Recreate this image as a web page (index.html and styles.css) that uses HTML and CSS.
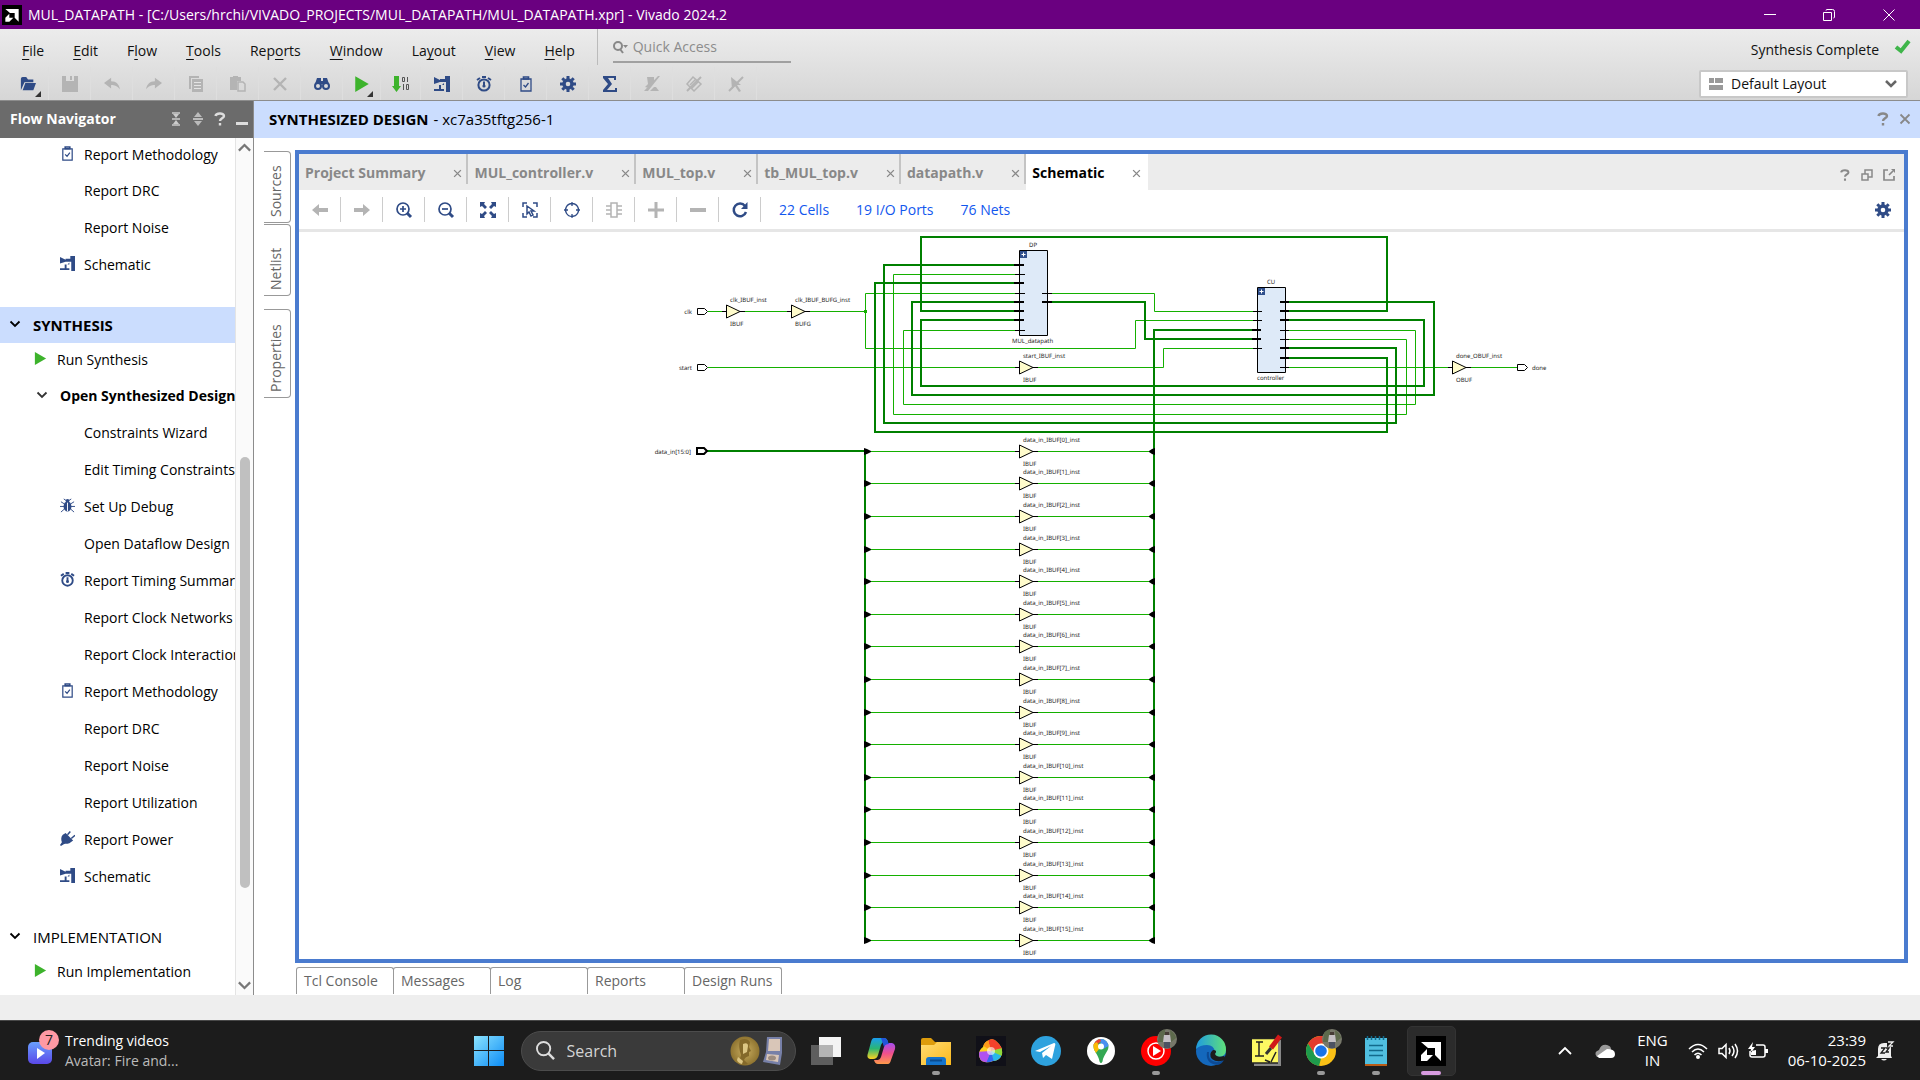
FILE: index.html
```html
<!DOCTYPE html>
<html lang="en">
<head>
<meta charset="utf-8">
<title>MUL_DATAPATH - Vivado 2024.2</title>
<link rel="stylesheet" href="styles.css">
</head>
<body>
<svg class="defs" aria-hidden="true">
  <defs>
    <linearGradient id="gWin" x1="0" y1="0" x2="1" y2="1"><stop offset="0" stop-color="#8be3ff"/><stop offset="1" stop-color="#0c8cf5"/></linearGradient>
    <linearGradient id="gVid" x1="0" y1="0" x2="0" y2="1"><stop offset="0" stop-color="#6aa0ff"/><stop offset="1" stop-color="#5a48e8"/></linearGradient>
    <linearGradient id="gCopA" x1="0" y1="0" x2="0" y2="1"><stop offset="0" stop-color="#1a9cf0"/><stop offset=".5" stop-color="#2bb673"/><stop offset="1" stop-color="#ffd21f"/></linearGradient>
    <linearGradient id="gCopB" x1="0" y1="0" x2="0" y2="1"><stop offset="0" stop-color="#a44df0"/><stop offset=".5" stop-color="#f0508c"/><stop offset="1" stop-color="#ff9a4a"/></linearGradient>
    <linearGradient id="gEdge" x1="0" y1="0" x2="1" y2="0"><stop offset="0" stop-color="#1f9be0"/><stop offset="1" stop-color="#5fe07a"/></linearGradient>
    <linearGradient id="gFold" x1="0" y1="0" x2="1" y2="1"><stop offset="0" stop-color="#ffdc73"/><stop offset="1" stop-color="#fbb91c"/></linearGradient>
    <radialGradient id="gMedal"><stop offset="0" stop-color="#c9ad5f"/><stop offset="1" stop-color="#8f7430"/></radialGradient>
    <clipPath id="cBlob"><path d="M13 4q5-2 8 2 6 5 5 12-2 7-9 7-4 2-8 1-6-1-6-8 0-4 4-7 1-5 6-7z"/></clipPath>
    <clipPath id="cPin"><path d="M15 3a7.500 7.500 0 0 1 7.500 7.500c0 5-5 8-6 15q-1.500 3-3 0c-1-7-6-10-6-15A7.500 7.500 0 0 1 15 3z"/></clipPath>
  </defs>
  <symbol id="schem" viewBox="0 0 16 16"><path fill="currentColor" d="M0 1l6 3v-1h5V0h5v16h-4V6H6L0 8zM10 7v2H7v4h3v2H0v-2h5V9h3z"/></symbol>
  <symbol id="clip" viewBox="0 0 16 16"><path fill="none" stroke="currentColor" stroke-width="1.300" d="M3 3h10v12H3zM5.500 9l2 2 3-4"/><path fill="none" stroke="currentColor" stroke-width="1.600" d="M5.500 3V1h5v2z"/></symbol>
  <symbol id="timer" viewBox="0 0 16 16"><circle cx="8" cy="9" r="5.600" fill="none" stroke="currentColor" stroke-width="2"/><path fill="none" stroke="currentColor" stroke-width="2" d="M8 5.500V10M6 1h4M1 4l3-2M15 4l-3-2"/><circle cx="8" cy="10" r="1.600" fill="currentColor"/></symbol>
  <symbol id="bug" viewBox="0 0 16 16"><ellipse cx="8" cy="9" rx="4.200" ry="5.500" fill="currentColor"/><circle cx="8" cy="3" r="2" fill="currentColor"/><path stroke="currentColor" fill="none" d="M4 1l3 2M12 1L9 3M1 4l4 2.500M15 4l-4 2.500M0 9h16M1 15l4-3.500M15 15l-4-3.500"/><path stroke="#fff" d="M8 5v9"/></symbol>
  <symbol id="plug" viewBox="0 0 16 16"><path fill="currentColor" d="M3 4l3-2 8 8-4 3c-3 1-4 0-6 1l-3 2-1-1 2-3C1 9 1 6 3 4z"/><path stroke="currentColor" stroke-width="1.600" d="M8 4l3-3.500M12 8l4-3.500"/></symbol>
  <symbol id="play" viewBox="0 0 16 16"><path fill="#3db32c" d="M2 1l12 7-12 7z"/></symbol>
  <symbol id="gear" viewBox="0 0 16 16"><circle cx="8" cy="8" r="4" fill="none" stroke="currentColor" stroke-width="3.400"/><path stroke="currentColor" stroke-width="3" d="M8 0v3M8 13v3M0 8h3M13 8h3M2.300 2.300l2 2M11.700 11.700l2 2M2.300 13.700l2-2M11.700 4.300l2-2"/></symbol>
  <symbol id="chev" viewBox="0 0 12 12"><path fill="none" stroke="currentColor" stroke-width="1.800" d="M1.500 3.500L6 8l4.500-4.500"/></symbol>
  <symbol id="x" viewBox="0 0 12 12"><path fill="none" stroke="currentColor" stroke-width="1.800" d="M1.500 1.500l9 9M10.500 1.500l-9 9"/></symbol>
  <symbol id="help" viewBox="0 0 12 14"><path fill="none" stroke="currentColor" stroke-width="2.400" d="M1.500 4C2 .8 10 .5 10 4c0 2.200-4 2.500-4 5M6 11v2.600"/></symbol>
  <symbol id="arrow" viewBox="0 0 16 16"><path fill="currentColor" d="M0 8l7-6v4h9v4H7v4z"/></symbol>
  <symbol id="undo" viewBox="0 0 18 16"><path fill="currentColor" d="M0 7l8-6v4c6 0 9 4 10 9-3-4-6-5-10-5v4z"/></symbol>
  <symbol id="amd" viewBox="0 0 30 30"><path fill="#000" d="M0 0h30v30H0z"/><path fill="#fff" d="M5 6h20v19l-6-6v-7h-7zM11 13v6h6l-6 6H5v-6z"/></symbol>
  <symbol id="face" viewBox="0 0 20 20"><circle cx="10" cy="10" r="10" fill="#77786a"/><path fill="#5d6a4c" d="M2 4q4-4 6-3v12H1zM13 1q5 3 6 8l-5 4z"/><path fill="#463c35" d="M8 3h4v3H8z"/><path fill="#c4c0c4" d="M7 6h6l1 7H6z"/><path fill="#4c5262" d="M7 13h6v6H7z"/></symbol>
</svg>

<header class="titlebar">
  <svg class="i20"><use href="#amd"/></svg>
  <h1>MUL_DATAPATH - [C:/Users/hrchi/VIVADO_PROJECTS/MUL_DATAPATH/MUL_DATAPATH.xpr] - Vivado 2024.2</h1>
  <div class="winbtns">
    <button aria-label="Minimize"><svg viewBox="0 0 12 12"><path d="M0 5.500h12"/></svg></button>
    <button aria-label="Restore"><svg viewBox="0 0 12 12"><path d="M.5 3.500h8v8h-8zM3 1.500q0-1 1-1h5.500q2 0 2 2V8q0 1-1 1"/></svg></button>
    <button aria-label="Close"><svg viewBox="0 0 12 12"><path d="M.5.5l11 11M11.500.5l-11 11"/></svg></button>
  </div>
</header>

<div class="ribbon">
  <div class="left">
    <div class="menurow">
      <nav class="menu">
        <button><u>F</u>ile</button><button><u>E</u>dit</button><button>F<u>l</u>ow</button><button><u>T</u>ools</button><button>Rep<u>o</u>rts</button><button><u>W</u>indow</button><button>La<u>y</u>out</button><button><u>V</u>iew</button><button><u>H</u>elp</button>
      </nav>
      <label class="quick"><svg viewBox="0 0 16 14"><circle cx="5" cy="6" r="4"/><path class="tail" d="M7 9l3 4"/><path class="tip" d="M10 5h5l-2.500 3z"/></svg><input type="text" placeholder="Quick Access" aria-label="Quick Access"></label>
    </div>
    <div class="tools">
      <button aria-label="Open project"><svg class="i16" viewBox="0 0 18 18"><path fill="currentColor" d="M1 16V3q0-2 2-2h4l2 3h6v3H5zM3 16L6 8h12l-3 8z"/></svg><i class="corner"></i></button>
      <button class="off" aria-label="Save"><svg class="i16" viewBox="0 0 16 16"><path fill="currentColor" d="M0 0h4v5h8V0h4v16H0zM8 0h2v4H8z"/></svg></button>
      <button class="off" aria-label="Undo"><svg class="i16"><use href="#undo"/></svg></button>
      <button class="off" aria-label="Redo"><svg class="i16 flip"><use href="#undo"/></svg></button>
      <button class="off" aria-label="Copy"><svg class="i16" viewBox="0 0 16 16"><path fill="currentColor" d="M1 0h10v2H3v11H1zM4 3h11v13H4z"/><path stroke="#e4e4e4" d="M6 6.500h7M6 9.500h7M6 12.500h7"/></svg></button>
      <button class="off" aria-label="Paste"><svg class="i16" viewBox="0 0 16 16"><path fill="currentColor" d="M0 1h3V0h5v1h3v4H7v9H0z"/><path fill="none" stroke="currentColor" stroke-width="1.500" d="M8 6h5l2 2v7H8z"/></svg></button>
      <button class="off" aria-label="Delete"><svg class="i16"><use href="#x"/></svg></button>
      <button aria-label="Find"><svg class="i16" viewBox="0 0 16 16"><path fill="currentColor" d="M3 2h4v3h2V2h4l2 6H1z"/><g fill="none" stroke="currentColor" stroke-width="2"><circle cx="4" cy="10" r="3"/><circle cx="12" cy="10" r="3"/></g></svg></button>
      <button class="run" aria-label="Run"><svg class="i18"><use href="#play"/></svg><i class="corner"></i></button>
      <button class="bits" aria-label="Generate bitstream"><svg class="i16" viewBox="0 0 16 16"><path fill="#3db32c" d="M1 0h5v10h2l-4.500 6L-1 10h2z"/><path fill="none" stroke="#555" d="M9.500 1.500h2v4h-2zM14.500 1v5M10.500 8v6M13.500 8.500h2v5h-2z"/></svg></button>
      <button aria-label="Schematic"><svg class="i16"><use href="#schem"/></svg></button>
      <button aria-label="Timing"><svg class="i16"><use href="#timer"/></svg></button>
      <button aria-label="Methodology"><svg class="i16"><use href="#clip"/></svg></button>
      <button aria-label="Settings"><svg class="i16"><use href="#gear"/></svg></button>
      <button aria-label="Report"><svg class="i16" viewBox="0 0 16 16"><path fill="currentColor" d="M1 0h13v4h-2V2H6l4 6-5 6h8v-2h2v4H1v-2l5-6-5-6z"/></svg></button>
      <button class="off" aria-label="Unmark"><svg class="i16" viewBox="0 0 16 16"><path fill="currentColor" d="M3 1h7v4l2-1-7 8-4-1 3-3zM0 15L14 0h2L4 15zM6 15l4-4h2l3 4z"/></svg></button>
      <button class="off" aria-label="Clear highlight"><svg class="i16" viewBox="0 0 16 16"><path fill="none" stroke="currentColor" stroke-width="1.500" d="M1 8l6-7 8 7-7 7zM4 9l6-6M6 12l6-6"/><path stroke="currentColor" stroke-width="2" d="M1 15L15 1"/></svg></button>
      <button class="off" aria-label="Unselect"><svg class="i16" viewBox="0 0 16 16"><path fill="currentColor" d="M3 1l10 8H9l4 6-2 1-4-6-3 3z"/><path stroke="currentColor" stroke-width="2" d="M1 15L15 1"/></svg></button>
    </div>
  </div>
  <div class="right">
    <div class="status">Synthesis Complete <svg class="i16" viewBox="0 0 16 16"><path fill="none" stroke="#3fb54a" stroke-width="4" d="M1 8l5 4 8-10"/></svg></div>
    <div class="layout">
      <svg viewBox="0 0 14 12"><path fill="#999" d="M0 0h5v5H0zM6 0h8v5H6zM0 7h14v5H0z"/></svg>
      <select aria-label="Layout"><option>Default Layout</option></select>
      <svg viewBox="0 0 12 12"><path fill="none" stroke="#666" stroke-width="2.500" d="M1 3l5 5 5-5"/></svg>
    </div>
  </div>
</div>

<main>
  <aside>
    <div class="navhead"><h2>Flow Navigator</h2>
      <button aria-label="Collapse all"><svg viewBox="0 0 12 14"><path d="M2 7h8M2 1h8M2 13h8" stroke="#ccc" stroke-width="1.500"/><path fill="#ccc" d="M3 2h6L6 6zM3 12h6L6 8z"/></svg></button>
      <button aria-label="Expand all"><svg viewBox="0 0 12 14"><path fill="#bbb" d="M2 5h8L6 0zM2 9h8l-4 5zM1 6h10v2H1z"/></svg></button>
      <button aria-label="Help"><svg viewBox="0 0 12 14"><use href="#help"/></svg></button>
      <button aria-label="Minimize panel"><svg viewBox="0 0 12 14"><path fill="#ddd" d="M0 10h12v3H0z"/></svg></button>
    </div>
    <div class="navbody">
      <nav class="tree">
        <ul>
          <li><svg><use href="#clip"/></svg><a href="#">Report Methodology</a></li>
          <li><a href="#">Report DRC</a></li>
          <li><a href="#">Report Noise</a></li>
          <li><svg><use href="#schem"/></svg><a href="#">Schematic</a></li>
        </ul>
        <h3 class="sel"><svg><use href="#chev"/></svg>SYNTHESIS</h3>
        <ul>
          <li class="act"><svg><use href="#play"/></svg><a href="#">Run Synthesis</a></li>
          <li class="open"><svg><use href="#chev"/></svg><a href="#">Open Synthesized Design</a></li>
          <li><a href="#">Constraints Wizard</a></li>
          <li><a href="#">Edit Timing Constraints</a></li>
          <li><svg><use href="#bug"/></svg><a href="#">Set Up Debug</a></li>
          <li><a href="#">Open Dataflow Design</a></li>
          <li><svg><use href="#timer"/></svg><a href="#">Report Timing Summary</a></li>
          <li><a href="#">Report Clock Networks</a></li>
          <li><a href="#">Report Clock Interaction</a></li>
          <li><svg><use href="#clip"/></svg><a href="#">Report Methodology</a></li>
          <li><a href="#">Report DRC</a></li>
          <li><a href="#">Report Noise</a></li>
          <li><a href="#">Report Utilization</a></li>
          <li><svg><use href="#plug"/></svg><a href="#">Report Power</a></li>
          <li><svg><use href="#schem"/></svg><a href="#">Schematic</a></li>
        </ul>
        <h3><svg><use href="#chev"/></svg>IMPLEMENTATION</h3>
        <ul>
          <li class="act"><svg><use href="#play"/></svg><a href="#">Run Implementation</a></li>
        </ul>
      </nav>
      <div class="scroll">
        <svg class="up"><use href="#chev"/></svg>
        <div class="thumb"></div>
        <svg><use href="#chev"/></svg>
      </div>
    </div>
  </aside>

  <section class="design">
    <div class="dhead"><h2>SYNTHESIZED DESIGN</h2><span>- xc7a35tftg256-1</span>
      <button aria-label="Help"><svg><use href="#help"/></svg></button>
      <button aria-label="Close design"><svg><use href="#x"/></svg></button>
    </div>
    <div class="work">
      <div class="sidetabs">
        <button>Sources</button><button>Netlist</button><button class="apart">Properties</button>
      </div>
      <div class="stack">
        <div class="pane">
          <div class="tabs">
            <button>Project Summary<svg><use href="#x"/></svg></button>
            <button>MUL_controller.v<svg><use href="#x"/></svg></button>
            <button>MUL_top.v<svg><use href="#x"/></svg></button>
            <button>tb_MUL_top.v<svg><use href="#x"/></svg></button>
            <button>datapath.v<svg><use href="#x"/></svg></button>
            <button class="on">Schematic<svg><use href="#x"/></svg></button>
            <div class="ptools">
              <svg viewBox="0 0 12 12"><use href="#help"/></svg>
              <svg viewBox="0 0 12 12"><path fill="none" stroke="currentColor" stroke-width="1.500" d="M1 5h6v6H1zM4 5V1h7v7H7"/></svg>
              <svg viewBox="0 0 12 12"><path fill="none" stroke="currentColor" stroke-width="1.700" d="M5 1H1v10h10V7M6 6l4-4"/><path fill="currentColor" d="M8 0h4v4z"/></svg>
            </div>
          </div>
          <div class="stools">
            <button class="off" aria-label="Back"><svg><use href="#arrow"/></svg></button>
            <button class="off" aria-label="Forward"><svg class="flip"><use href="#arrow"/></svg></button>
            <button aria-label="Zoom in"><svg viewBox="0 0 16 16"><g fill="none" stroke="currentColor" stroke-width="1.700"><circle cx="7" cy="7" r="6"/><path d="M7 4v6M4 7h6"/><path stroke-width="3" d="M11 11l4 4"/></g></svg></button>
            <button aria-label="Zoom out"><svg viewBox="0 0 16 16"><g fill="none" stroke="currentColor" stroke-width="1.700"><circle cx="7" cy="7" r="6"/><path d="M4 7h6"/><path stroke-width="3" d="M11 11l4 4"/></g></svg></button>
            <button aria-label="Zoom fit"><svg viewBox="0 0 16 16"><path fill="currentColor" d="M0 0h5L4 2l3 3-2 2-3-3-2 1zM16 0h-5l1 2-3 3 2 2 3-3 2 1zM0 16h5l-1-2 3-3-2-2-3 3-2-1zM16 16h-5l1-2-3-3 2-2 3 3 2-1z"/></svg></button>
            <button aria-label="Zoom selection"><svg viewBox="0 0 16 16"><path fill="none" stroke="currentColor" stroke-width="1.500" d="M1 5V1h4M11 1h4v4M15 11v4h-4M5 15H1v-4M5 4l7 5H9l2 4-2 1-2-4-2 2z"/></svg></button>
            <button aria-label="Autofit"><svg viewBox="0 0 16 16"><path fill="none" stroke="currentColor" stroke-width="1.300" d="M8 1.500a6.500 6.500 0 1 0 .1 0zM8 0v4M8 12v4M0 8h4M12 8h4"/></svg></button>
            <button class="off" aria-label="Expand cell"><svg viewBox="0 0 16 16"><path fill="none" stroke="currentColor" stroke-width="1.500" d="M5 1h6v14H5zM0 4h5M0 8h5M0 12h5M11 4h5M11 8h5M11 12h5"/></svg></button>
            <button class="off" aria-label="Add"><svg viewBox="0 0 16 16"><path stroke="currentColor" stroke-width="3" d="M8 0v16M0 8h16"/></svg></button>
            <button class="off" aria-label="Remove"><svg viewBox="0 0 16 16"><path stroke="currentColor" stroke-width="4" d="M0 8h16"/></svg></button>
            <button aria-label="Regenerate"><svg viewBox="0 0 16 16"><path fill="none" stroke="currentColor" stroke-width="2.500" d="M13 4a6.300 6.300 0 1 0 1 6"/><path fill="currentColor" d="M15.500 0v7H9z"/></svg></button>
            <div class="links"><a href="#">22 Cells</a><a href="#">19 I/O Ports</a><a href="#">76 Nets</a></div>
            <button class="cfg" aria-label="Settings"><svg><use href="#gear"/></svg></button>
          </div>
          <svg class="sheet" viewBox="299 232 1605 727" role="img" aria-label="Schematic">
            <defs>
              <g id="row"><path class="net" d="M866 .5H1016M1038 .5H1154"/><path d="M864-3l3 1 4 2v1l-4 2-3 1zM1155-3l-3 1-3 2v1l3 2 3 1z"/><use href="#b" x="1019"/><text x="1023" y="15">IBUF</text></g>
              <g id="b"><path class="pin" d="M-4 .5H0M14 .5h5"/><path class="tri" d="M.5-6L14 .5.5 7z"/></g>
            </defs>
            <g class="net">
              <path d="M708 311.500H722M744 311.500H787M809 311.500H865.500M1016 293.500H865.500V348.500H1135.500V320.500H1254"/>
              <path d="M1052 293.500H1154.500V311.500H1254M708 367.500H1016M1038 367.500H1163.500V348.500H1254M1289 367.500H1449M1471 367.500H1517"/>
              <path d="M1016 274.500H893.500V414.500H1406.500V339.500H1289M1016 330.500H903.500V404.500H1415.500V330.500H1289"/>
            </g>
            <path fill="#14b000" d="M864 310h3v3h-3z"/>
            <g class="bus">
              <path d="M1015 311H921V237H1387V311H1289M1015 265H884V423H1396V348H1289M1015 283H875V432H1387V358H1289"/>
              <path d="M1015 302H912V395H1434V302H1289M1015 320H921V386H1424V320H1289M1052 302H1145V339H1253"/>
              <path d="M707 451H865V940M1253 330H1154V940"/>
            </g>
            <path class="box" d="M1019.500 250.500h28v85h-28zM1257.500 287.500h28v85h-28z"/>
            <path class="pin" d="M1015 274.500h10M1015 293.500h10M1015 330.500h10M1042 293.500h10M1253 311.500h9M1253 320.500h9M1253 348.500h9M1280 330.500h9M1280 339.500h9M1280 367.500h9"/>
            <path class="pin fat" d="M1014 265h10M1014 283h10M1014 302h10M1014 311h10M1014 320h10M1042 302h10M1252 330h9M1252 339h9M1280 302h9M1280 311h9M1280 320h9M1280 348h9M1280 358h9"/>
            <path fill="#2f4f8c" d="M1020 251h7v7h-7zM1258 288h7v7h-7z"/>
            <path stroke="#fff" d="M1021.500 254.500h4M1023.500 252.500v4M1259.500 291.500h4M1261.500 289.500v4"/>
            <g class="port"><path d="M697.500 308.500h7l3 3-3 3h-7zM697.500 364.500h7l3 3-3 3h-7zM1517.500 364.500h7l3 3-3 3h-7z"/><path stroke-width="2" d="M697 448h7l3 3-3 3h-7z"/></g>
            <use href="#b" x="726" y="311"/><use href="#b" x="791" y="311"/><use href="#b" x="1019" y="367"/><use href="#b" x="1452" y="367"/>
            <use href="#row" y="451"/><use href="#row" y="483"/><use href="#row" y="516"/><use href="#row" y="549"/>
            <use href="#row" y="581"/><use href="#row" y="614"/><use href="#row" y="646"/><use href="#row" y="679"/>
            <use href="#row" y="712"/><use href="#row" y="744"/><use href="#row" y="777"/><use href="#row" y="809"/>
            <use href="#row" y="842"/><use href="#row" y="875"/><use href="#row" y="907"/><use href="#row" y="940"/>
            <text x="730" y="302">clk_IBUF_inst</text><text x="730" y="326">IBUF</text>
            <text x="795" y="302">clk_IBUF_BUFG_inst</text><text x="795" y="326">BUFG</text>
            <text x="1029" y="247">DP</text><text x="1012" y="343">MUL_datapath</text>
            <text x="1267" y="284">CU</text><text x="1257" y="380">controller</text>
            <text x="1023" y="358">start_IBUF_inst</text><text x="1023" y="382">IBUF</text>
            <text x="1456" y="358">done_OBUF_inst</text><text x="1456" y="382">OBUF</text>
            <text x="1532" y="370">done</text>
            <g text-anchor="end"><text x="692" y="314">clk</text><text x="692" y="370">start</text><text x="691" y="454">data_in[15:0]</text></g>
            <text x="1023" y="442">data_in_IBUF[0]_inst</text><text x="1023" y="474">data_in_IBUF[1]_inst</text>
            <text x="1023" y="507">data_in_IBUF[2]_inst</text><text x="1023" y="540">data_in_IBUF[3]_inst</text>
            <text x="1023" y="572">data_in_IBUF[4]_inst</text><text x="1023" y="605">data_in_IBUF[5]_inst</text>
            <text x="1023" y="637">data_in_IBUF[6]_inst</text><text x="1023" y="670">data_in_IBUF[7]_inst</text>
            <text x="1023" y="703">data_in_IBUF[8]_inst</text><text x="1023" y="735">data_in_IBUF[9]_inst</text>
            <text x="1023" y="768">data_in_IBUF[10]_inst</text><text x="1023" y="800">data_in_IBUF[11]_inst</text>
            <text x="1023" y="833">data_in_IBUF[12]_inst</text><text x="1023" y="866">data_in_IBUF[13]_inst</text>
            <text x="1023" y="898">data_in_IBUF[14]_inst</text><text x="1023" y="931">data_in_IBUF[15]_inst</text>
          </svg>
        </div>
        <div class="btabs"><button>Tcl Console</button><button>Messages</button><button>Log</button><button>Reports</button><button>Design Runs</button></div>
      </div>
    </div>
  </section>
</main>
<div class="statusbar"></div>

<footer class="taskbar">
  <button class="widget">
    <span class="vid"><svg viewBox="0 0 24 22"><rect width="24" height="22" rx="5" fill="url(#gVid)"/><path fill="#fff" d="M9 6l8 5-8 6z"/></svg><b>7</b></span>
    <span class="wt"><span>Trending videos</span><small>Avatar: Fire and...</small></span>
  </button>
  <div class="apps">
    <button class="start" aria-label="Start"><svg viewBox="0 0 30 30"><path fill="url(#gWin)" d="M0 0h14v14H0zM15 0h15v14H15zM0 15h14v15H0zM15 15h15v15H15z"/></svg></button>
    <label class="search">
      <svg viewBox="0 0 20 20"><circle cx="8" cy="8" r="7" fill="none" stroke="#ddd" stroke-width="2"/><path stroke="#ddd" stroke-width="2.500" d="M13 13l6 6"/></svg>
      <input type="text" placeholder="Search" aria-label="Search">
      <svg class="medal" viewBox="0 0 54 32"><circle cx="15" cy="16" r="14.500" fill="url(#gMedal)"/><path fill="#84692a" d="M10 5q7-3 10 2l-1 5 2 4-2 1v4q-4 1-5 4l4 4q-5 2-9-1 1-5 2-8-3-8-1-15z"/><path fill="#dcc684" d="M13 9q5-2 5 2l-1 6-4 2zM8 22l5 4-1 3q-4-1-5-4z"/><path fill="#7780a8" d="M37 2h15v16l-2 12-17-3 3-10z"/><path fill="#d9c6b8" d="M39 4h11v12H38zM37 19l12 1-1 7-12-2z"/><ellipse cx="42" cy="23" rx="4" ry="2.500" fill="#9c8c80"/></svg>
    </label>
    <button aria-label="Task view"><svg viewBox="0 0 30 30"><path fill="#f4f4f4" d="M8 1h22v20H8z"/><path fill="#666" fill-opacity=".9" d="M0 9h22v20H0z"/><path fill="#b4b4b4" d="M8 9h14v12H8z"/></svg></button>
    <button aria-label="Copilot"><svg viewBox="0 0 30 30"><path fill="url(#gCopA)" d="M8 2h10q3 0 4 4h-4q-2 0-3 3l-3 10q-1 4-5 4H4q-4-1-2-6L5 6q1-4 3-4z"/><path fill="url(#gCopB)" d="M22 28H12q-3 0-4-4h4q2 0 3-3l3-10q1-4 5-4h3q4 1 3 6l-4 11q-1 4-3 4z"/><path fill="#2255d8" d="M15 2h3q3 0 4 4l1 2q-4 0-5 3z"/></svg></button>
    <button class="live" aria-label="File Explorer"><svg viewBox="0 0 30 30"><path fill="#dd9c0c" d="M0 4q0-2 2-2h8l4 4h14v4H0z"/><path fill="url(#gFold)" d="M0 9h13l3-3h14v23H0z"/><path fill="#1474cc" d="M5 29v-5q0-3 3-3h14q3 0 3 3v5z"/><path stroke="#0a4c90" stroke-width="2" d="M9 24.500h12"/></svg></button>
    <button aria-label="Colour app"><svg viewBox="0 0 30 30"><path fill="#101018" d="M0 0h30v30H0z"/><g clip-path="url(#cBlob)"><path fill="#ffd21f" d="M0 0h30v30H0z"/><path fill="#f4402c" d="M15 15L11 0h18v12z"/><path fill="#ff9a1a" d="M15 15l-4-15-9 6z"/><path fill="#8ed93c" d="M15 15l15-4v12z"/><path fill="#28b8e8" d="M15 15l15 7-12 8z"/><path fill="#3468f0" d="M15 15l4 15H8z"/><path fill="#b052f0" d="M15 15L9 30 0 28V16z"/><circle cx="15" cy="15" r="4" fill="#fff" fill-opacity=".6"/></g></svg></button>
    <button aria-label="Telegram"><svg viewBox="0 0 30 30"><circle cx="15" cy="15" r="15" fill="#2ea2de"/><path fill="#fff" d="M4 15L23 7q2 0 1 3l-3 13-6-4-3 3-1-5 9-7-11 6z"/></svg></button>
    <button aria-label="Maps"><svg viewBox="0 0 30 30"><circle cx="15" cy="15" r="14" fill="#fff"/><g clip-path="url(#cPin)"><path fill="#34a853" d="M0 0h30v30H0z"/><path fill="#4a90f0" d="M12 0h14v8l-9 5z"/><path fill="#ea4335" d="M5 0h8l2 5-6 6-4-3z"/><path fill="#fbbc04" d="M5 9l6-3 3 6-5 6z"/></g><circle cx="15" cy="10.500" r="3" fill="#fff"/></svg></button>
    <button class="live" aria-label="YouTube Music"><svg viewBox="0 0 30 30"><circle cx="15" cy="15" r="15" fill="#f00"/><circle cx="15" cy="15" r="8" fill="none" stroke="#fff" stroke-width="1.500"/><path fill="#fff" d="M12 10l8 5-8 5z"/></svg><svg class="face"><use href="#face"/></svg></button>
    <button aria-label="Edge"><svg viewBox="0 0 30 30"><circle cx="15" cy="15" r="15" fill="#1468bc"/><path fill="url(#gEdge)" d="M0 13A15 15 0 0 1 30 14q0 7-8 7-6-1-3-5Q18 9 11 9 4 9 0 13z"/><path fill="#0d4a94" d="M11 16q-2 12 11 13 4-1 6-5-7 4-13 0-3-3-2-8z"/><path fill="#1c1c1c" d="M17 14q5 0 2 4 2 4 9 2 2 1 0 4-7 3-12-1-4-5 1-9z"/></svg></button>
    <button aria-label="Journal"><svg viewBox="0 0 30 30"><path fill="#888" d="M3 4h27v26H3z"/><path fill="#fdf862" d="M1 2h26v25H1z"/><path fill="none" stroke="#222" stroke-width="1.500" d="M5 6h7M8 6v14M4 20h9M20 26l5-10M14 24l5 2M1 2.500h26M1 27h26"/><path stroke="#d01818" stroke-width="5" d="M29 0l-9 12"/><path stroke="#333" stroke-width="3" d="M20 12l-5 6"/></svg></button>
    <button class="live" aria-label="Chrome"><svg viewBox="0 0 30 30"><circle cx="15" cy="15" r="15" fill="#fbc116"/><path fill="#e33b2e" d="M2 7.500a15 15 0 0 1 26 0H15l-6 11z"/><path fill="#1e9b4c" d="M2 7.500L9 18.500q2 3 6 4L13 30A15 15 0 0 1 2 7.500z"/><circle cx="15" cy="15" r="7.500" fill="#fff"/><circle cx="15" cy="15" r="5.800" fill="#1a73e8"/></svg><svg class="face"><use href="#face"/></svg></button>
    <button class="live" aria-label="Notepad"><svg viewBox="0 0 30 30"><path fill="#b85c18" d="M4 27h22v3H4z"/><path fill="#50bfe0" d="M4 2h22v26H4z"/><path stroke="#126a8c" stroke-width="1.500" d="M8 9.500h14M8 14.500h14M8 19.500h14M6.500 0v4M10.500 0v4M14.500 0v4M18.500 0v4M22.500 0v4"/></svg></button>
    <button class="live cur" aria-label="Vivado"><svg viewBox="0 0 30 30"><use href="#amd"/></svg></button>
  </div>
  <div class="tray">
    <svg class="t14" viewBox="0 0 14 14"><path fill="none" stroke="#fff" stroke-width="1.800" d="M1 10l6-6 6 6"/></svg>
    <svg class="t20" viewBox="0 0 20 14"><path fill="#999" d="M4 6q2-6 8-5 4 1 4 4l-6 6-8 2Q-2 8 4 6z"/><path fill="#fff" d="M2 12l10-7q8 0 8 5 0 4-4 4H4z"/></svg>
    <div class="two mid"><span>ENG</span><span>IN</span></div>
    <svg class="t20" viewBox="0 0 20 16"><g fill="none" stroke="#fff" stroke-width="1.500"><path d="M1 6q9-9 18 0M4 9q6-6 12 0M6.500 12q3.500-3.500 7 0"/></g><circle cx="10" cy="14" r="2" fill="#fff"/></svg>
    <svg class="t20" viewBox="0 0 20 18"><path fill="none" stroke="#fff" stroke-width="1.500" d="M1 6.500h3l4-4v13l-4-4H1zM11 6q2 3 0 6M14 4q4 5 0 10M17 2q5 7 0 14"/></svg>
    <svg class="t20" viewBox="0 0 20 18"><path fill="none" stroke="#fff" stroke-width="1.500" d="M8 3h7q2 0 2 2v8q0 2-2 2H4q-2 0-2-2V9"/><path fill="#fff" d="M17 7h3v4h-3zM5 0L0 7h3l-1 5 5-7H4zM3 9l5-1v5H3z"/></svg>
    <div class="two end"><span>23:39</span><span>06-10-2025</span></div>
    <svg class="t18" viewBox="0 0 18 20"><path fill="#eee" d="M2 15V8q0-6 6-6h3v4h4v9l1 2H0zM5 18h6q-3 3-6 0z"/><path fill="none" stroke="#1c1c1c" stroke-width="1.300" d="M5 7h4l-4 5h4M10 7h3l-3 4h3"/><path fill="none" stroke="#eee" stroke-width="1.300" d="M12 1h5l-4 4h4"/></svg>
  </div>
</footer>
</body>
</html>
```
FILE: styles.css
```css
* { box-sizing: border-box; }
html, body { height: 100%; }
body {
  margin: 0;
  display: flex;
  flex-direction: column;
  overflow: hidden;
  background: #fff;
  color: #111;
  font: 14px/20px "Open Sans", "Noto Sans", sans-serif;
}
.defs { position: absolute; width: 0; height: 0; }
button { border: 0; padding: 0; margin: 0; background: none; font: inherit; color: inherit; display: inline-flex; align-items: center; justify-content: center; }
svg { display: block; flex: none; overflow: visible; }
h1, h2, h3, ul { margin: 0; padding: 0; font-size: inherit; }
a { color: inherit; text-decoration: none; }
input, select { font: inherit; border: 0; outline: 0; background: none; min-width: 0; padding: 0; }
.i16 { width: 16px; height: 16px; }
.i18 { width: 18px; height: 18px; }
.i20 { width: 20px; height: 20px; }
.flip { transform: scaleX(-1); }

.titlebar { height: 29px; flex: none; display: flex; align-items: center; gap: 6px; padding-left: 2px; background: #6a0080; color: #fff; }
.titlebar h1 { font-weight: 400; }
.winbtns { margin-left: auto; display: flex; }
.winbtns button { width: 59px; height: 29px; }
.winbtns svg { width: 12px; height: 12px; fill: none; stroke: #fff; }
.winbtns button:last-child { width: 62px; }

.ribbon { height: 72px; flex: none; display: flex; justify-content: space-between; background: linear-gradient(#ececec, #d6d6d6); border-bottom: 1px solid #8c8c8c; }
.menurow { display: flex; height: 38px; }
.menu { display: flex; align-items: center; gap: 29px; padding: 8px 22px 0 22px; border-right: 1px solid #bbb; height: 36px; }
.menu u { text-underline-offset: 3px; }
.quick { display: flex; align-items: center; gap: 4px; width: 178px; height: 30px; margin: 4px 0 0 15px; border-bottom: 2px solid #a0a0a0; }
.quick svg { width: 16px; height: 14px; fill: none; stroke: #888; stroke-width: 2; }
.quick .tip { fill: #888; stroke: none; }
.quick input { width: 140px; }
.quick input::placeholder { color: #8c8c8c; opacity: 1; }
.tools { display: flex; padding-left: 7px; height: 33px; color: #2f4b86; }
.tools button { position: relative; width: 42px; border-right: 1px solid #dedede; }
.tools .run { width: 38px; }
.tools .bits { width: 40px; }
.tools .off, .off { color: #b4b4b4; }
.corner { position: absolute; right: 7px; bottom: 3px; border: 3px solid transparent; border-right-color: #333; border-bottom-color: #333; }
.right { width: 221px; padding-right: 12px; }
.status { display: flex; align-items: center; justify-content: flex-end; gap: 16px; height: 41px; margin-right: -3px; }
.status svg { margin-top: -6px; }
.layout { display: flex; align-items: center; gap: 8px; height: 28px; padding: 0 8px; border: 2px solid #c8c8c8; border-radius: 2px; background: #fff; }
.layout svg { width: 14px; height: 12px; }
.layout select { flex: 1; appearance: none; color: #111; }

main { flex: 1; min-height: 0; display: flex; }
aside { width: 254px; flex: none; display: flex; flex-direction: column; border-right: 1px solid #8c8c8c; }
.navhead { height: 37px; flex: none; display: flex; align-items: center; gap: 10px; padding: 0 5px 2px 10px; background: #6b6b6b; color: #fff; }
.navhead h2 { flex: 1; white-space: nowrap; }
.navhead svg { width: 12px; height: 14px; color: #ddd; }
.navbody { flex: 1; min-height: 0; display: flex; }
.tree { flex: 1; min-width: 0; overflow: hidden; color: #000; }
.tree ul { list-style: none; }
.tree li { display: flex; align-items: center; height: 37px; padding: 0 0 2px 84px; white-space: nowrap; }
.tree li:first-child { height: 35px; }
.tree li svg { width: 15px; height: 15px; margin: -2px 9px 0 -24px; color: #2f4b86; }
.tree li.act { padding-left: 57px; }
.tree li.open { padding-left: 60px; font-weight: 700; }
.tree li.open svg { width: 12px; height: 12px; margin-right: 12px; color: #333; }
.tree h3 { display: flex; align-items: center; gap: 12px; height: 36px; margin-top: 23px; padding-left: 9px; font-size: 15px; font-weight: 400; }
.tree h3 svg { width: 12px; height: 12px; margin-top: -2px; }
.tree h3.sel { background: #cbddfe; font-weight: 700; }
.scroll { width: 18px; flex: none; display: flex; flex-direction: column; align-items: center; padding: 2px 0; border-left: 1px solid #e4e4e4; background: #fafafa; color: #777; }
.scroll svg { width: 15px; height: 15px; }
.scroll .up { transform: rotate(180deg); }
.thumb { width: 10px; height: 50.5%; border-radius: 5px; background: #c0c0c0; margin: 302px 0 auto; }

.design { flex: 1; min-width: 0; display: flex; flex-direction: column; }
.dhead { height: 37px; flex: none; display: flex; align-items: center; gap: 5px; padding: 0 9px 2px 15px; background: #cbddfe; color: #000; font-size: 15px; }
.dhead span { flex: 1; }
.dhead button { margin-left: 5px; color: #888; }
.dhead svg { width: 12px; height: 14px; }
.work { flex: 1; min-height: 0; display: flex; padding: 12px 12px 0 10px; }
.sidetabs { width: 31px; flex: none; padding-top: 1px; }
.sidetabs button { width: 27px; height: 72px; padding: 5px 0 5px 3px; justify-content: flex-start; writing-mode: vertical-rl; transform: rotate(180deg); border: 1px solid #999; border-right: 0; border-radius: 4px 0 0 4px; color: #666; margin-bottom: 1px; }
.sidetabs .apart { height: 89px; margin-top: 12px; }
.stack { flex: 1; min-width: 0; display: flex; flex-direction: column; }
.pane { flex: 1; min-height: 0; display: flex; flex-direction: column; border: 4px solid #4a7bcf; }
.tabs { height: 36px; flex: none; display: flex; background: #ececec; color: #888; font-weight: 700; }
.tabs button { height: 30px; padding: 7px 4px 0 6px; gap: 28px; border-right: 2px solid #c4c4c4; white-space: nowrap; }
.tabs button svg { width: 9px; height: 9px; margin-top: 1px; }
.tabs .on { height: 36px; padding: 1px 7px 0 6px; background: #fff; color: #000; border: 0; }
.tabs .on svg { color: #888; }
.ptools { margin-left: auto; display: flex; align-items: center; gap: 10px; padding: 5px 9px 0 0; }
.ptools svg { width: 12px; height: 12px; }
.stools { height: 42px; flex: none; display: flex; align-items: center; border-bottom: 3px solid #e6e6e6; color: #2f4b86; }
.stools button { width: 42px; height: 25px; border-right: 1px solid #ccc; }
.stools button svg { width: 16px; height: 16px; }
.links { flex: 1; display: flex; gap: 27px; padding-left: 18px; color: #1257ee; }
.stools .cfg { border: 0; }
.sheet { flex: 1; min-height: 0; width: 100%; }
.sheet text { font-family: "Noto Sans", sans-serif; font-size: 6px; fill: #222; text-rendering: geometricPrecision; }
.net { fill: none; stroke: #14b000; }
.bus { fill: none; stroke: #008000; stroke-width: 2; }
.pin { fill: none; stroke: #000; }
.fat { stroke-width: 2; }
.tri { fill: #fffccc; stroke: #000; }
.box { fill: #deeaf8; stroke: #000; }
.port { fill: #fff; stroke: #000; }
.btabs { height: 32px; flex: none; display: flex; padding: 4px 0 1px 1px; color: #666; }
.btabs button { width: 98px; margin-right: -1px; padding-left: 7px; justify-content: flex-start; border: 1px solid #999; border-bottom: 0; border-radius: 3px 3px 0 0; white-space: nowrap; }
.statusbar { height: 25px; flex: none; background: #eee; }

.taskbar { height: 60px; flex: none; display: grid; grid-template-columns: 1fr auto 1fr; align-items: center; background: #1c1c1c; border-top: 1px solid #484848; color: #fff; }
.widget { justify-self: start; gap: 13px; padding-left: 28px; text-align: left; }
.vid { position: relative; padding-top: 4px; }
.vid svg { width: 24px; height: 22px; }
.vid b { position: absolute; left: 11px; top: -8px; width: 20px; height: 20px; border-radius: 10px; background: #ff99a4; color: #222; font-weight: 400; text-align: center; }
.wt span, .wt small { display: block; font-size: 14px; }
.wt small { color: #bbb; }
.apps { display: flex; align-items: center; }
.apps > button { position: relative; width: 55px; height: 50px; border-radius: 5px; }
.apps > button > svg { width: 30px; height: 30px; }
.apps > button > .face { position: absolute; width: 20px; height: 20px; right: 7px; top: 3px; }
.live::after { content: ""; position: absolute; bottom: 1px; width: 8px; height: 4px; border-radius: 2px; background: #999; }
.apps .cur { width: 49px; margin: 0 3px; background: #2b2b2b; border: 1px solid #333; }
.apps .cur::after { width: 20px; background: #d79be0; bottom: 0; }
.search { display: flex; align-items: center; width: 275px; height: 40px; margin: 0 3px 0 4px; padding: 0 11px 0 14px; border: 1px solid #4c4c4c; border-radius: 20px; background: #3a3a3a; }
.search > svg:first-child { width: 19px; height: 19px; }
.search input { flex: 1; margin-left: 12px; font-size: 16px; color: #ddd; }
.search input::placeholder { color: #d4d4d4; opacity: 1; }
.search .medal { width: 54px; height: 32px; }
.tray { justify-self: end; display: flex; align-items: center; padding-right: 26px; gap: 10px; font-size: 15px; }
.two { display: flex; flex-direction: column; margin-top: -2px; }
.mid { align-items: center; margin-left: 12px; margin-right: 10px; }
.end { align-items: flex-end; margin-left: 10px; }
.t14 { width: 14px; height: 14px; margin-right: 13px; }
.t20 { width: 20px; height: 18px; }
.t18 { width: 18px; height: 20px; }
```
